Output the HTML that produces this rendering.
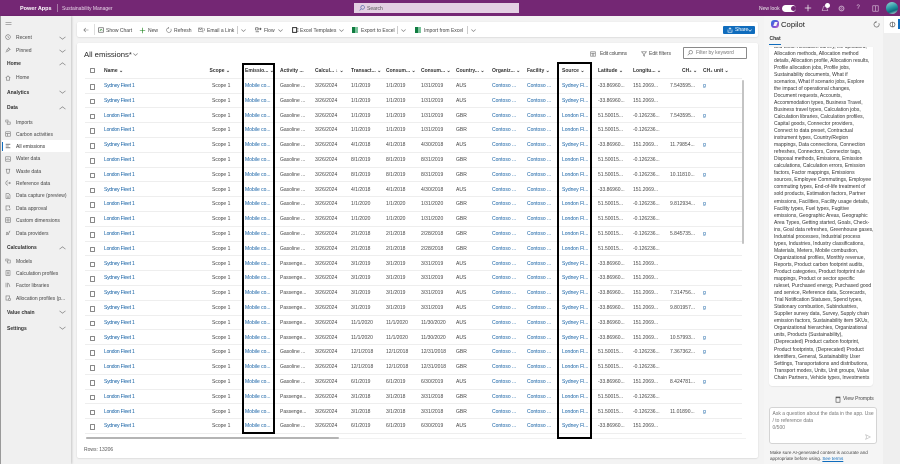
<!DOCTYPE html>
<html lang="en"><head><meta charset="utf-8"><title>All emissions</title>
<style>
*{box-sizing:border-box}
html,body{margin:0;padding:0;background:#f3f3f3}
#w{position:relative;width:900px;height:464px;overflow:hidden;background:#f3f3f3;font:5px/7px "Liberation Sans",sans-serif;color:#333;filter:blur(.35px)}
#w div,#w span,#w svg{position:absolute}
#w span{margin-top:1px}
.t{white-space:nowrap}
.b{font-weight:700}
#top{left:0;top:0;width:900px;height:16px;background:#742774}
#side{left:0;top:16px;width:71px;height:448px;background:#f0f0f0;border-left:1px solid #999;box-shadow:1px 0 2px rgba(0,0,0,.18)}
.card{background:#fff;border-radius:2px;box-shadow:0 .5px 1.5px rgba(0,0,0,.14)}
.s{left:16px;color:#444;white-space:nowrap}
.h{left:7px;font-weight:700;color:#333;white-space:nowrap}
svg{fill:none;stroke:#777;stroke-width:.6}
.r{left:0;width:900px;height:14.8px;line-height:14.8px}
.l{left:85px;width:657px;height:.8px;background:#eee}
.r span{top:0;white-space:nowrap;color:#444}
.r span:nth-child(1){left:89.5px;top:5px;margin-top:0;width:5.5px;height:5.5px;border:.6px solid #888;border-radius:.6px}
.r span:nth-child(2){left:104px;color:#115ea3;letter-spacing:-.2px}
.r span:nth-child(3){left:212px}
.r span:nth-child(4){left:245px;color:#115ea3}
.r span:nth-child(5){left:280px}
.r span:nth-child(6){left:315px}
.r span:nth-child(7){left:351px}
.r span:nth-child(8){left:386px}
.r span:nth-child(9){left:421px}
.r span:nth-child(10){left:456px}
.r span:nth-child(11){left:492px;color:#115ea3}
.r span:nth-child(12){left:527px;color:#115ea3}
.r span:nth-child(13){left:562px;color:#115ea3}
.r span:nth-child(14){left:598px}
.r span:nth-child(15){left:633px}
.r span:nth-child(16){left:670px}
.r span:nth-child(17){left:703px;color:#115ea3}
.th{top:67px;font-weight:700;color:#333;white-space:nowrap}
.cmd{top:26.5px;color:#444;white-space:nowrap}
.box{border:2px solid #000;background:transparent}
#chat{white-space:nowrap;line-height:7.04px;color:#333;font-size:5px}
</style></head><body><div id="w">

<div id="top"></div>
<span class="t b" style="left:20px;top:4.5px;color:#fff;font-size:5.5px">Power Apps</span>
<div style="left:57px;top:4px;width:.6px;height:8px;background:#a77aa7"></div>
<span class="t" style="left:62px;top:4.5px;color:#e8d8e8">Sustainability Manager</span>
<div style="left:354px;top:3px;width:165px;height:10px;background:#e3d0e3"></div>
<svg style="left:359px;top:5px" width="6" height="6" viewBox="0 0 6 6"><circle cx="3.6" cy="2.4" r="1.8" stroke="#4a5fa5"/><path d="M2.3 3.7L.6 5.4" stroke="#4a5fa5"/></svg>
<span class="t" style="left:367px;top:4.5px;color:#555">Search</span>
<span class="t" style="left:759px;top:4.5px;color:#eee">New look</span>
<div style="left:782px;top:4.5px;width:14px;height:7px;border-radius:4px;background:#fff"></div>
<div style="left:790.5px;top:5.5px;width:5px;height:5px;border-radius:50%;background:#742774"></div>
<svg style="left:804px;top:4px" width="8" height="8" viewBox="0 0 8 8"><path d="M4 .8V7.2M.8 4H7.2" stroke="#eee" stroke-width=".8"/></svg>
<svg style="left:821px;top:3.5px" width="8" height="9" viewBox="0 0 8 9"><path d="M4 2C2.5 2 2 3 2 4.500L1.200 6.500H6.800L6 4.500C6 3 5.500 2 4 2Z" stroke="#e0c8e0"/></svg>
<div style="left:825px;top:2.500px;width:5px;height:5px;border-radius:50%;background:#fff"></div>
<svg style="left:838px;top:4.500px" width="7" height="7" viewBox="0 0 7 7"><circle cx="3.500" cy="3.500" r="2.400" stroke="#caaaca" stroke-width="1"/><circle cx="3.500" cy="3.500" r=".8" stroke="#caaaca"/></svg>
<span class="t" style="left:856.500px;top:4px;color:#e0c8e0;font-size:6px">?</span>
<svg style="left:872px;top:4.500px" width="7" height="7" viewBox="0 0 7 7"><rect x=".8" y=".8" width="5.400" height="5.400" stroke="#e0c8e0"/><path d="M3.500.8V6.200" stroke="#e0c8e0"/></svg>
<div style="left:886px;top:2px;width:12px;height:12px;border-radius:50%;background:linear-gradient(160deg,#9fd8d8 0%,#2a9aa5 45%,#0d6a7c 70%,#e6f4f4 100%)"></div>

<div id="side"></div>
<svg style="left:5px;top:21px" width="7" height="6" viewBox="0 0 7 6"><path d="M.5 1.500H6.500M.5 3.500H6.500" stroke="#666"/></svg>
<svg style="left:5px;top:34px" width="6" height="6" viewBox="0 0 6 6"><circle cx="3" cy="3" r="2.300"/><path d="M3 1.600V3L4 3.600"/></svg><span class="s" style="top:33.500px">Recent</span>
<svg style="left:5px;top:47px" width="6" height="6" viewBox="0 0 6 6"><path d="M3.500.8L5.200 2.500L3.800 3.200L2.800 4.400L1.600 3.200L2.800 2.200ZM1.800 4.200L.7 5.300"/></svg><span class="s" style="top:46.500px">Pinned</span>
<span class="h" style="top:60px">Home</span>
<svg style="left:5px;top:74.500px" width="6" height="6" viewBox="0 0 6 6"><path d="M.7 3L3 .8L5.300 3M1.400 2.600V5.200H4.600V2.600"/></svg><span class="s" style="top:74px">Home</span>
<span class="h" style="top:88.500px">Analytics</span>
<span class="h" style="top:104px">Data</span>
<svg style="left:5px;top:119px" width="6" height="6" viewBox="0 0 6 6"><path d="M.8 1H3V3H.8ZM2.200 3V5.200H5.200V3H3"/></svg><span class="s" style="top:118.500px">Imports</span>
<svg style="left:5px;top:131px" width="6" height="6" viewBox="0 0 6 6"><rect x=".7" y=".8" width="4.600" height="4.400"/><path d="M.7 2.400H5.300M2.500 2.400V5.200"/></svg><span class="s" style="top:130.500px">Carbon activities</span>
<div style="left:2px;top:140px;width:68px;height:12px;background:#fff"></div>
<div style="left:2px;top:142px;width:1px;height:9px;background:#0f6cbd"></div>
<svg style="left:5px;top:143px" width="6" height="6" viewBox="0 0 6 6"><path d="M.7 1.200H5.300M.7 3H3.800M.7 4.800H5.300" stroke="#333"/></svg><span class="s" style="top:142.500px;color:#333">All emissions</span>
<svg style="left:5px;top:155.500px" width="6" height="6" viewBox="0 0 6 6"><rect x=".7" y=".8" width="4.600" height="4.400"/><path d="M1.800 4V2.800M3 4V1.800M4.200 4V3"/></svg><span class="s" style="top:155px">Water data</span>
<svg style="left:5px;top:168px" width="6" height="6" viewBox="0 0 6 6"><path d="M.8 1.200H5.200M1.400 1.200L2 5.200H4L4.600 1.200"/></svg><span class="s" style="top:167.500px">Waste data</span>
<svg style="left:5px;top:180px" width="6" height="6" viewBox="0 0 6 6"><path d="M3 .8A2.200 2.200 0 1 0 3 5.200M2.200 3H5.500M4.400 2L5.400 3L4.400 4"/></svg><span class="s" style="top:179.500px">Reference data</span>
<svg style="left:5px;top:193px" width="6" height="6" viewBox="0 0 6 6"><path d="M1 .7H3.800L5 2V5.300H1ZM2 3H4M2 4.200H4"/></svg><span class="s" style="top:192px">Data capture (preview)</span>
<svg style="left:5px;top:205px" width="6" height="6" viewBox="0 0 6 6"><path d="M4.600 3V.9H1V5.100H3M3.500 4.400L4.200 5.100L5.400 3.800"/></svg><span class="s" style="top:204.500px">Data approval</span>
<svg style="left:5px;top:217px" width="6" height="6" viewBox="0 0 6 6"><rect x=".7" y=".7" width="4.600" height="4.600"/><rect x="2" y="2" width="2" height="2"/></svg><span class="s" style="top:217px">Custom dimensions</span>
<svg style="left:5px;top:230px" width="6" height="6" viewBox="0 0 6 6"><path d="M1 5L2.400 3.600M2 2.200L3.800 4L3 4.600L1.400 3ZM3.600 2.400L5.200.8M4 1.600L4.800 2.600"/></svg><span class="s" style="top:229.500px">Data providers</span>
<span class="h" style="top:243.500px">Calculations</span>
<svg style="left:5px;top:258px" width="6" height="6" viewBox="0 0 6 6"><path d="M.8 1H3V3H.8ZM3 2H5.200V5H2.500V3"/></svg><span class="s" style="top:257.500px">Models</span>
<svg style="left:5px;top:270px" width="6" height="6" viewBox="0 0 6 6"><path d="M1 .7H5V5.300H1ZM2 2H4M2 3H4M2 4H4"/></svg><span class="s" style="top:269.500px">Calculation profiles</span>
<svg style="left:5px;top:282px" width="6" height="6" viewBox="0 0 6 6"><path d="M1 .8V5.200M2.400 .8V5.200M3.500 1L5 5"/></svg><span class="s" style="top:282px">Factor libraries</span>
<svg style="left:5px;top:295px" width="6" height="6" viewBox="0 0 6 6"><path d="M4.600 3V.9H1V5.100H3M3.500 3.500H5.300V5.300H3.500Z"/></svg><span class="s" style="top:294.500px">Allocation profiles (p...</span>
<span class="h" style="top:308.500px">Value chain</span>
<span class="h" style="top:324.500px">Settings</span>
<svg style="left:59px;top:36px" width="7" height="4" viewBox="0 0 7 4"><path d="M.5.800L3.500 3.200L6.500.800"/></svg>
<svg style="left:59px;top:48.500px" width="7" height="4" viewBox="0 0 7 4"><path d="M.5.800L3.500 3.200L6.500.800"/></svg>
<svg style="left:59px;top:62px" width="7" height="4" viewBox="0 0 7 4"><path d="M.5 3.200L3.500.800L6.500 3.200"/></svg>
<svg style="left:59px;top:90px" width="7" height="4" viewBox="0 0 7 4"><path d="M.5.800L3.500 3.200L6.500.800"/></svg>
<svg style="left:59px;top:105.500px" width="7" height="4" viewBox="0 0 7 4"><path d="M.5 3.200L3.500.800L6.500 3.200"/></svg>
<svg style="left:59px;top:245.500px" width="7" height="4" viewBox="0 0 7 4"><path d="M.5 3.200L3.500.800L6.500 3.200"/></svg>
<svg style="left:59px;top:310px" width="7" height="4" viewBox="0 0 7 4"><path d="M.5.800L3.500 3.200L6.500.800"/></svg>
<svg style="left:59px;top:326px" width="7" height="4" viewBox="0 0 7 4"><path d="M.5.800L3.500 3.200L6.500.800"/></svg>

<div class="card" style="left:77px;top:22px;width:681px;height:15px"></div>
<svg style="left:83px;top:27px" width="6" height="6" viewBox="0 0 6 6"><path d="M5.500 3H.8M2.800 1L.8 3L2.800 5"/></svg>
<div style="left:93.500px;top:24px;width:.5px;height:11px;background:#ddd"></div>
<svg style="left:98px;top:27px" width="6" height="6" viewBox="0 0 6 6"><rect x=".6" y=".8" width="4.800" height="4.400" stroke="#444"/><path d="M1.800 4L3 2.400L4.400 3.400" stroke="#107c10"/></svg><span class="cmd" style="left:106px">Show Chart</span>
<svg style="left:139px;top:26.500px" width="7" height="7" viewBox="0 0 7 7"><path d="M3.500.8V6.200M.8 3.500H6.200" stroke="#107c10"/></svg><span class="cmd" style="left:148px">New</span>
<svg style="left:166px;top:27px" width="6" height="6" viewBox="0 0 6 6"><path d="M4.800 1.800A2.300 2.300 0 1 1 3 .8M3 .8L2.200 .2M3 .8L2.300 1.600"/></svg><span class="cmd" style="left:174px">Refresh</span>
<svg style="left:198px;top:27px" width="8" height="6" viewBox="0 0 8 6"><rect x=".6" y="1" width="3.600" height="3.600"/><path d="M.6 1L2.400 2.800L4.200 1M5.500 1.500A1 1 0 1 1 5.500 3.800M5 4.500V5.500"/></svg><span class="cmd" style="left:207px">Email a Link</span>
<div style="left:236.500px;top:26px;width:.5px;height:8px;background:#ccc"></div>
<svg style="left:241px;top:28.500px" width="5" height="3" viewBox="0 0 5 3"><path d="M.4.500L2.500 2.500L4.600.500"/></svg>
<svg style="left:255px;top:27px" width="7" height="6" viewBox="0 0 7 6"><path d="M.6.800H3V3H.6ZM3 1.900H6.200M5 .8L6.200 1.900L5 3M.6 4.800H4" stroke="#444"/></svg><span class="cmd" style="left:264px">Flow</span>
<svg style="left:278px;top:28.500px" width="5" height="3" viewBox="0 0 5 3"><path d="M.4.500L2.500 2.500L4.600.500"/></svg>
<svg style="left:292px;top:27px" width="7" height="6" viewBox="0 0 7 6"><rect x=".6" y=".6" width="4" height="4.800" stroke="#333" stroke-width="1"/><path d="M5 1.500H6.500M5 3H6.500M5 4.500H6.500" stroke="#333"/></svg><span class="cmd" style="left:300px">Excel Templates</span>
<svg style="left:338.500px;top:28.500px" width="5" height="3" viewBox="0 0 5 3"><path d="M.4.500L2.500 2.500L4.600.500"/></svg>
<div style="left:352px;top:27px;width:3.500px;height:6px;background:#107c41"></div><div style="left:355px;top:27px;width:3px;height:6px;background:#7ac29a"></div>
<span class="cmd" style="left:361px">Export to Excel</span>
<div style="left:397px;top:26px;width:.5px;height:8px;background:#ccc"></div>
<svg style="left:401px;top:28.500px" width="5" height="3" viewBox="0 0 5 3"><path d="M.4.500L2.500 2.500L4.600.500"/></svg>
<div style="left:415px;top:27px;width:3.500px;height:6px;background:#107c41"></div><div style="left:418px;top:27px;width:3px;height:6px;background:#7ac29a"></div>
<span class="cmd" style="left:424px">Import from Excel</span>
<div style="left:467px;top:26px;width:.5px;height:8px;background:#ccc"></div>
<svg style="left:471px;top:28.500px" width="5" height="3" viewBox="0 0 5 3"><path d="M.4.500L2.500 2.500L4.600.500"/></svg>
<div style="left:723px;top:25.500px;width:32px;height:8.500px;background:#0f6cbd;border-radius:1px"></div>
<svg style="left:727px;top:27px" width="6" height="6" viewBox="0 0 6 6"><path d="M1 2.500V5.200H5V2.500M3 3.800V.8M1.800 1.800L3 .8L4.200 1.800" stroke="#fff"/></svg>
<span class="t" style="left:735px;top:25.500px;color:#fff">Share</span>
<svg style="left:748px;top:28.500px" width="4" height="3" viewBox="0 0 4 3"><path d="M.4.600L2 2.200L3.600.600" stroke="#fff"/></svg>

<div class="card" style="left:77px;top:43px;width:681px;height:415px"></div>
<span class="t" style="left:84px;top:48.500px;font-size:7.700px;line-height:9px;color:#242424">All emissions*</span>
<svg style="left:132.500px;top:52.500px" width="5" height="3" viewBox="0 0 5 3"><path d="M.4.500L2.500 2.500L4.600.500"/></svg>
<svg style="left:590px;top:50.500px" width="6" height="6" viewBox="0 0 6 6"><rect x=".6" y=".8" width="4.800" height="4.400"/><path d="M.6 2.200H5.400M2.200 2.200V5.200M3.800 2.200V5.200"/></svg>
<span class="t" style="left:600px;top:49.500px;color:#444;letter-spacing:-.15px">Edit columns</span>
<svg style="left:640.500px;top:50.500px" width="6" height="6" viewBox="0 0 6 6"><path d="M.6.800H5.400L3.500 3V5.200L2.500 4.600V3Z"/></svg>
<span class="t" style="left:649px;top:49.500px;color:#444">Edit filters</span>
<div style="left:683px;top:47px;width:64px;height:11.500px;border:.7px solid #8a8a8a;border-radius:1px"></div>
<svg style="left:687px;top:49.500px" width="6" height="6" viewBox="0 0 6 6"><circle cx="3.700" cy="2.300" r="1.700"/><path d="M2.400 3.600L.7 5.300"/></svg>
<span class="t" style="left:696px;top:48.500px;color:#777">Filter by keyword</span>

<div style="left:89.500px;top:67.500px;width:5.500px;height:5.500px;border:.6px solid #888;border-radius:.6px"></div>
<span class="th" style="left:104px">Name ⌄</span>
<span class="th" style="left:209.500px">Scope ⌄</span>
<span class="th" style="left:245px">Emissio... ⌄</span>
<span class="th" style="left:280px">Activity ...</span>
<span class="th" style="left:315px">Calcul... ↓ ⌄</span>
<span class="th" style="left:351px">Transact... ⌄</span>
<span class="th" style="left:386px">Consum... ⌄</span>
<span class="th" style="left:421px">Consum... ⌄</span>
<span class="th" style="left:456px">Country... ⌄</span>
<span class="th" style="left:492px">Organiz... ⌄</span>
<span class="th" style="left:527px">Facility ⌄</span>
<span class="th" style="left:562px">Source ⌄</span>
<span class="th" style="left:598px">Latitude ⌄</span>
<span class="th" style="left:633px">Longitu... ⌄</span>
<span class="th" style="left:682px">CH₄ ⌄</span>
<span class="th" style="left:703px">CH₄ unit ⌄</span>
<div class="l" style="top:77.500px"></div>

<div class="r" style="top:78px"><span></span><span>Sydney Fleet 1</span><span>Scope 1</span><span>Mobile co...</span><span>Gasoline ...</span><span>3/26/2024</span><span>1/1/2019</span><span>1/1/2019</span><span>1/31/2019</span><span>AUS</span><span>Contoso ...</span><span>Contoso ...</span><span>Sydney Fl...</span><span>-33.86960...</span><span>151.2069...</span><span>7.543595...</span><span>g</span></div>
<div class="r" style="top:92.800px"><span></span><span>Sydney Fleet 1</span><span>Scope 1</span><span>Mobile co...</span><span>Gasoline ...</span><span>3/26/2024</span><span>1/1/2019</span><span>1/1/2019</span><span>1/31/2019</span><span>AUS</span><span>Contoso ...</span><span>Contoso ...</span><span>Sydney Fl...</span><span>-33.86960...</span><span>151.2069...</span></div>
<div class="r" style="top:107.600px"><span></span><span>London Fleet 1</span><span>Scope 1</span><span>Mobile co...</span><span>Gasoline ...</span><span>3/26/2024</span><span>1/1/2019</span><span>1/1/2019</span><span>1/31/2019</span><span>GBR</span><span>Contoso ...</span><span>Contoso ...</span><span>London Fl...</span><span>51.50015...</span><span>-0.126236...</span><span>7.543595...</span><span>g</span></div>
<div class="r" style="top:122.400px"><span></span><span>London Fleet 1</span><span>Scope 1</span><span>Mobile co...</span><span>Gasoline ...</span><span>3/26/2024</span><span>1/1/2019</span><span>1/1/2019</span><span>1/31/2019</span><span>GBR</span><span>Contoso ...</span><span>Contoso ...</span><span>London Fl...</span><span>51.50015...</span><span>-0.126236...</span></div>
<div class="r" style="top:137.200px"><span></span><span>Sydney Fleet 1</span><span>Scope 1</span><span>Mobile co...</span><span>Gasoline ...</span><span>3/26/2024</span><span>4/1/2018</span><span>4/1/2018</span><span>4/30/2018</span><span>AUS</span><span>Contoso ...</span><span>Contoso ...</span><span>Sydney Fl...</span><span>-33.86960...</span><span>151.2069...</span><span>11.79854...</span><span>g</span></div>
<div class="r" style="top:152px"><span></span><span>London Fleet 1</span><span>Scope 1</span><span>Mobile co...</span><span>Gasoline ...</span><span>3/26/2024</span><span>8/1/2019</span><span>8/1/2019</span><span>8/31/2019</span><span>GBR</span><span>Contoso ...</span><span>Contoso ...</span><span>London Fl...</span><span>51.50015...</span><span>-0.126236...</span></div>
<div class="r" style="top:166.800px"><span></span><span>London Fleet 1</span><span>Scope 1</span><span>Mobile co...</span><span>Gasoline ...</span><span>3/26/2024</span><span>8/1/2019</span><span>8/1/2019</span><span>8/31/2019</span><span>GBR</span><span>Contoso ...</span><span>Contoso ...</span><span>London Fl...</span><span>51.50015...</span><span>-0.126236...</span><span>10.11810...</span><span>g</span></div>
<div class="r" style="top:181.600px"><span></span><span>Sydney Fleet 1</span><span>Scope 1</span><span>Mobile co...</span><span>Gasoline ...</span><span>3/26/2024</span><span>4/1/2018</span><span>4/1/2018</span><span>4/30/2018</span><span>AUS</span><span>Contoso ...</span><span>Contoso ...</span><span>Sydney Fl...</span><span>-33.86960...</span><span>151.2069...</span></div>
<div class="r" style="top:196.400px"><span></span><span>London Fleet 1</span><span>Scope 1</span><span>Mobile co...</span><span>Gasoline ...</span><span>3/26/2024</span><span>1/1/2020</span><span>1/1/2020</span><span>1/31/2020</span><span>GBR</span><span>Contoso ...</span><span>Contoso ...</span><span>London Fl...</span><span>51.50015...</span><span>-0.126236...</span><span>9.812934...</span><span>g</span></div>
<div class="r" style="top:211.200px"><span></span><span>London Fleet 1</span><span>Scope 1</span><span>Mobile co...</span><span>Gasoline ...</span><span>3/26/2024</span><span>1/1/2020</span><span>1/1/2020</span><span>1/31/2020</span><span>GBR</span><span>Contoso ...</span><span>Contoso ...</span><span>London Fl...</span><span>51.50015...</span><span>-0.126236...</span></div>
<div class="r" style="top:226px"><span></span><span>London Fleet 1</span><span>Scope 1</span><span>Mobile co...</span><span>Gasoline ...</span><span>3/26/2024</span><span>2/1/2018</span><span>2/1/2018</span><span>2/28/2018</span><span>GBR</span><span>Contoso ...</span><span>Contoso ...</span><span>London Fl...</span><span>51.50015...</span><span>-0.126236...</span><span>5.845735...</span><span>g</span></div>
<div class="r" style="top:240.800px"><span></span><span>London Fleet 1</span><span>Scope 1</span><span>Mobile co...</span><span>Gasoline ...</span><span>3/26/2024</span><span>2/1/2018</span><span>2/1/2018</span><span>2/28/2018</span><span>GBR</span><span>Contoso ...</span><span>Contoso ...</span><span>London Fl...</span><span>51.50015...</span><span>-0.126236...</span></div>
<div class="r" style="top:255.600px"><span></span><span>Sydney Fleet 1</span><span>Scope 1</span><span>Mobile co...</span><span>Passenge...</span><span>3/26/2024</span><span>3/1/2019</span><span>3/1/2019</span><span>3/31/2019</span><span>AUS</span><span>Contoso ...</span><span>Contoso ...</span><span>Sydney Fl...</span><span>-33.86960...</span><span>151.2069...</span></div>
<div class="r" style="top:270.400px"><span></span><span>Sydney Fleet 1</span><span>Scope 1</span><span>Mobile co...</span><span>Passenge...</span><span>3/26/2024</span><span>3/1/2019</span><span>3/1/2019</span><span>3/31/2019</span><span>AUS</span><span>Contoso ...</span><span>Contoso ...</span><span>Sydney Fl...</span><span>-33.86960...</span><span>151.2069...</span></div>
<div class="r" style="top:285.200px"><span></span><span>Sydney Fleet 1</span><span>Scope 1</span><span>Mobile co...</span><span>Passenge...</span><span>3/26/2024</span><span>3/1/2019</span><span>3/1/2019</span><span>3/31/2019</span><span>AUS</span><span>Contoso ...</span><span>Contoso ...</span><span>Sydney Fl...</span><span>-33.86960...</span><span>151.2069...</span><span>7.314756...</span><span>g</span></div>
<div class="r" style="top:300px"><span></span><span>Sydney Fleet 1</span><span>Scope 1</span><span>Mobile co...</span><span>Passenge...</span><span>3/26/2024</span><span>3/1/2019</span><span>3/1/2019</span><span>3/31/2019</span><span>AUS</span><span>Contoso ...</span><span>Contoso ...</span><span>Sydney Fl...</span><span>-33.86960...</span><span>151.2069...</span><span>9.801957...</span><span>g</span></div>
<div class="r" style="top:314.800px"><span></span><span>Sydney Fleet 1</span><span>Scope 1</span><span>Mobile co...</span><span>Passenge...</span><span>3/26/2024</span><span>11/1/2020</span><span>11/1/2020</span><span>11/30/2020</span><span>AUS</span><span>Contoso ...</span><span>Contoso ...</span><span>Sydney Fl...</span><span>-33.86960...</span><span>151.2069...</span></div>
<div class="r" style="top:329.600px"><span></span><span>Sydney Fleet 1</span><span>Scope 1</span><span>Mobile co...</span><span>Passenge...</span><span>3/26/2024</span><span>11/1/2020</span><span>11/1/2020</span><span>11/30/2020</span><span>AUS</span><span>Contoso ...</span><span>Contoso ...</span><span>Sydney Fl...</span><span>-33.86960...</span><span>151.2069...</span><span>10.57993...</span><span>g</span></div>
<div class="r" style="top:344.400px"><span></span><span>London Fleet 1</span><span>Scope 1</span><span>Mobile co...</span><span>Gasoline ...</span><span>3/26/2024</span><span>12/1/2018</span><span>12/1/2018</span><span>12/31/2018</span><span>GBR</span><span>Contoso ...</span><span>Contoso ...</span><span>London Fl...</span><span>51.50015...</span><span>-0.126236...</span><span>7.367362...</span><span>g</span></div>
<div class="r" style="top:359.200px"><span></span><span>London Fleet 1</span><span>Scope 1</span><span>Mobile co...</span><span>Gasoline ...</span><span>3/26/2024</span><span>12/1/2018</span><span>12/1/2018</span><span>12/31/2018</span><span>GBR</span><span>Contoso ...</span><span>Contoso ...</span><span>London Fl...</span><span>51.50015...</span><span>-0.126236...</span></div>
<div class="r" style="top:374px"><span></span><span>Sydney Fleet 1</span><span>Scope 1</span><span>Mobile co...</span><span>Gasoline ...</span><span>3/26/2024</span><span>6/1/2019</span><span>6/1/2019</span><span>6/30/2019</span><span>AUS</span><span>Contoso ...</span><span>Contoso ...</span><span>Sydney Fl...</span><span>-33.86960...</span><span>151.2069...</span><span>8.424781...</span><span>g</span></div>
<div class="r" style="top:388.800px"><span></span><span>London Fleet 1</span><span>Scope 1</span><span>Mobile co...</span><span>Passenge...</span><span>3/26/2024</span><span>3/1/2018</span><span>3/1/2018</span><span>3/31/2018</span><span>GBR</span><span>Contoso ...</span><span>Contoso ...</span><span>London Fl...</span><span>51.50015...</span><span>-0.126236...</span></div>
<div class="r" style="top:403.600px"><span></span><span>London Fleet 1</span><span>Scope 1</span><span>Mobile co...</span><span>Passenge...</span><span>3/26/2024</span><span>3/1/2018</span><span>3/1/2018</span><span>3/31/2018</span><span>GBR</span><span>Contoso ...</span><span>Contoso ...</span><span>London Fl...</span><span>51.50015...</span><span>-0.126236...</span><span>11.01890...</span><span>g</span></div>
<div class="r" style="top:418.400px"><span></span><span>Sydney Fleet 1</span><span>Scope 1</span><span>Mobile co...</span><span>Gasoline ...</span><span>3/26/2024</span><span>6/1/2019</span><span>6/1/2019</span><span>6/30/2019</span><span>AUS</span><span>Contoso ...</span><span>Contoso ...</span><span>Sydney Fl...</span><span>-33.86960...</span><span>151.2069...</span></div>

<div class="l" style="top:92.500px"></div><div class="l" style="top:107.300px"></div><div class="l" style="top:122.100px"></div><div class="l" style="top:136.900px"></div><div class="l" style="top:151.700px"></div><div class="l" style="top:166.500px"></div><div class="l" style="top:181.300px"></div><div class="l" style="top:196.100px"></div><div class="l" style="top:210.900px"></div><div class="l" style="top:225.700px"></div><div class="l" style="top:240.500px"></div><div class="l" style="top:255.300px"></div><div class="l" style="top:270.100px"></div><div class="l" style="top:284.900px"></div><div class="l" style="top:299.700px"></div><div class="l" style="top:314.500px"></div><div class="l" style="top:329.300px"></div><div class="l" style="top:344.100px"></div><div class="l" style="top:358.900px"></div><div class="l" style="top:373.700px"></div><div class="l" style="top:388.500px"></div><div class="l" style="top:403.300px"></div><div class="l" style="top:418.100px"></div><div class="l" style="top:432.900px"></div>

<div style="left:742px;top:80px;width:2px;height:164px;background:#c4c4c4;border-radius:1px"></div>
<div style="left:86px;top:437.500px;width:660px;height:1px;background:#f2f2f2"></div>
<div style="left:86px;top:437px;width:253px;height:2px;background:#b4b4b4;border-radius:1px"></div>
<span class="t" style="left:84px;top:446px;color:#555">Rows: 13206</span>

<div class="box" style="left:241.500px;top:63px;width:33px;height:370.500px"></div>
<div class="box" style="left:556.500px;top:62px;width:35px;height:376.500px"></div>

<div style="left:764px;top:16px;width:119px;height:448px;background:#f5f5f5"></div>
<div style="left:883px;top:16px;width:17px;height:448px;background:#efefef"></div>
<div style="left:884px;top:16px;width:16px;height:17px;background:#fff"></div>
<div style="left:898px;top:19px;width:1.500px;height:10px;background:#0f6cbd"></div>
<svg style="left:889px;top:21px" width="7" height="7" viewBox="0 0 7 7"><circle cx="3.500" cy="3.500" r="2.500" stroke="#444"/><path d="M3.500 1V6" stroke="#444"/></svg>
<div style="left:771px;top:20px;width:8px;height:8px;border-radius:3px;background:linear-gradient(135deg,#2f7de1 0%,#6a4fd8 55%,#c86bc9 100%)"></div>
<div style="left:773.500px;top:22px;width:2.500px;height:4px;background:#f5f5f5;transform:skewX(-20deg)"></div>
<span class="t" style="left:781px;top:19px;font-size:7.700px;line-height:9px;color:#242424">Copilot</span>
<svg style="left:873px;top:21px" width="7" height="7" viewBox="0 0 7 7"><path d="M5.800 2.200A2.600 2.600 0 1 1 3.500.9M3.500.9L2.700.2M3.500.9L2.700 1.700" stroke="#555"/></svg>
<span class="t b" style="left:769.500px;top:34.500px;color:#333">Chat</span>
<div style="left:769px;top:44.200px;width:12px;height:.8px;background:#0f6cbd"></div>

<div style="left:769px;top:47px;width:104px;height:339px;background:#fff;border-radius:0 0 3px 3px;box-shadow:0 .5px 1px rgba(0,0,0,.1)"></div>
<div style="left:769px;top:47px;width:104px;height:337px;overflow:hidden"><div id="chat" style="left:5px;top:-3.500px">and tools: Allocation survey, file uploaded,<br>Allocation methods, Allocation method<br>details, Allocation profile, Allocation results,<br>Profile allocation jobs, Profile jobs,<br>Sustainability documents, What if<br>scenarios, What if scenario jobs, Explore<br>the impact of operational changes,<br>Document requests, Accounts,<br>Accommodation types, Business Travel,<br>Business travel types, Calculation jobs,<br>Calculation libraries, Calculation profiles,<br>Capital goods, Connector providers,<br>Connect to data preset, Contractual<br>instrument types, Country/Region<br>mappings, Data connections, Connection<br>refreshes, Connectors, Connector tags,<br>Disposal methods, Emissions, Emission<br>calculations, Calculation errors, Emission<br>factors, Factor mappings, Emissions<br>sources, Employee Commutings, Employee<br>commuting types, End-of-life treatment of<br>sold products, Estimation factors, Partner<br>emissions, Facilities, Facility usage details,<br>Facility types, Fuel types, Fugitive<br>emissions, Geographic Areas, Geographic<br>Area Types, Getting started, Goals, Check-<br>ins, Goal data refreshes, Greenhouse gases,<br>Industrial processes, Industrial process<br>types, Industries, Industry classifications,<br>Materials, Meters, Mobile combustion,<br>Organizational profiles, Monthly revenue,<br>Reports, Product carbon footprint audits,<br>Product categories, Product footprint rule<br>mappings, Product or sector specific<br>ruleset, Purchased energy, Purchased good<br>and service, Reference data, Scorecards,<br>Trial Notification Statuses, Spend types,<br>Stationary combustion, Subindustries,<br>Supplier survey data, Survey, Supply chain<br>emission factors, Sustainability item SKUs,<br>Organizational hierarchies, Organizational<br>units, Products (Sustainability),<br>(Deprecated) Product carbon footprint,<br>Product footprints, (Deprecated) Product<br>identifiers, General, Sustainability User<br>Settings, Transportations and distributions,<br>Transport modes, Units, Unit groups, Value<br>Chain Partners, Vehicle types, Investments</div></div>

<svg style="left:835px;top:396px" width="6" height="7" viewBox="0 0 6 7"><rect x="1" y="1" width="4" height="5.200" stroke="#444"/><path d="M1 1.800H5" stroke="#444"/></svg>
<span class="t" style="left:843px;top:395px;color:#444">View Prompts</span>
<div style="left:769px;top:407px;width:108px;height:37px;background:#fff;border:.6px solid #d4d4d4;border-radius:3px"></div>
<span class="t" style="left:772.500px;top:409.500px;color:#777;line-height:7px">Ask a question about the data in the app. Use<br>/ to reference data<br>0/500</span>
<svg style="left:865px;top:434px" width="6" height="6" viewBox="0 0 6 6"><path d="M.7.700L5.400 3L.7 5.300L1.500 3Z" stroke="#bbb"/></svg>
<span class="t" style="left:770px;top:448.500px;color:#444;font-size:4.600px;line-height:6.500px">Make sure AI-generated content is accurate and<br>appropriate before using. <span style="position:static;margin:0;color:#0f6cbd;text-decoration:underline">See terms</span></span>

</div></body></html>
